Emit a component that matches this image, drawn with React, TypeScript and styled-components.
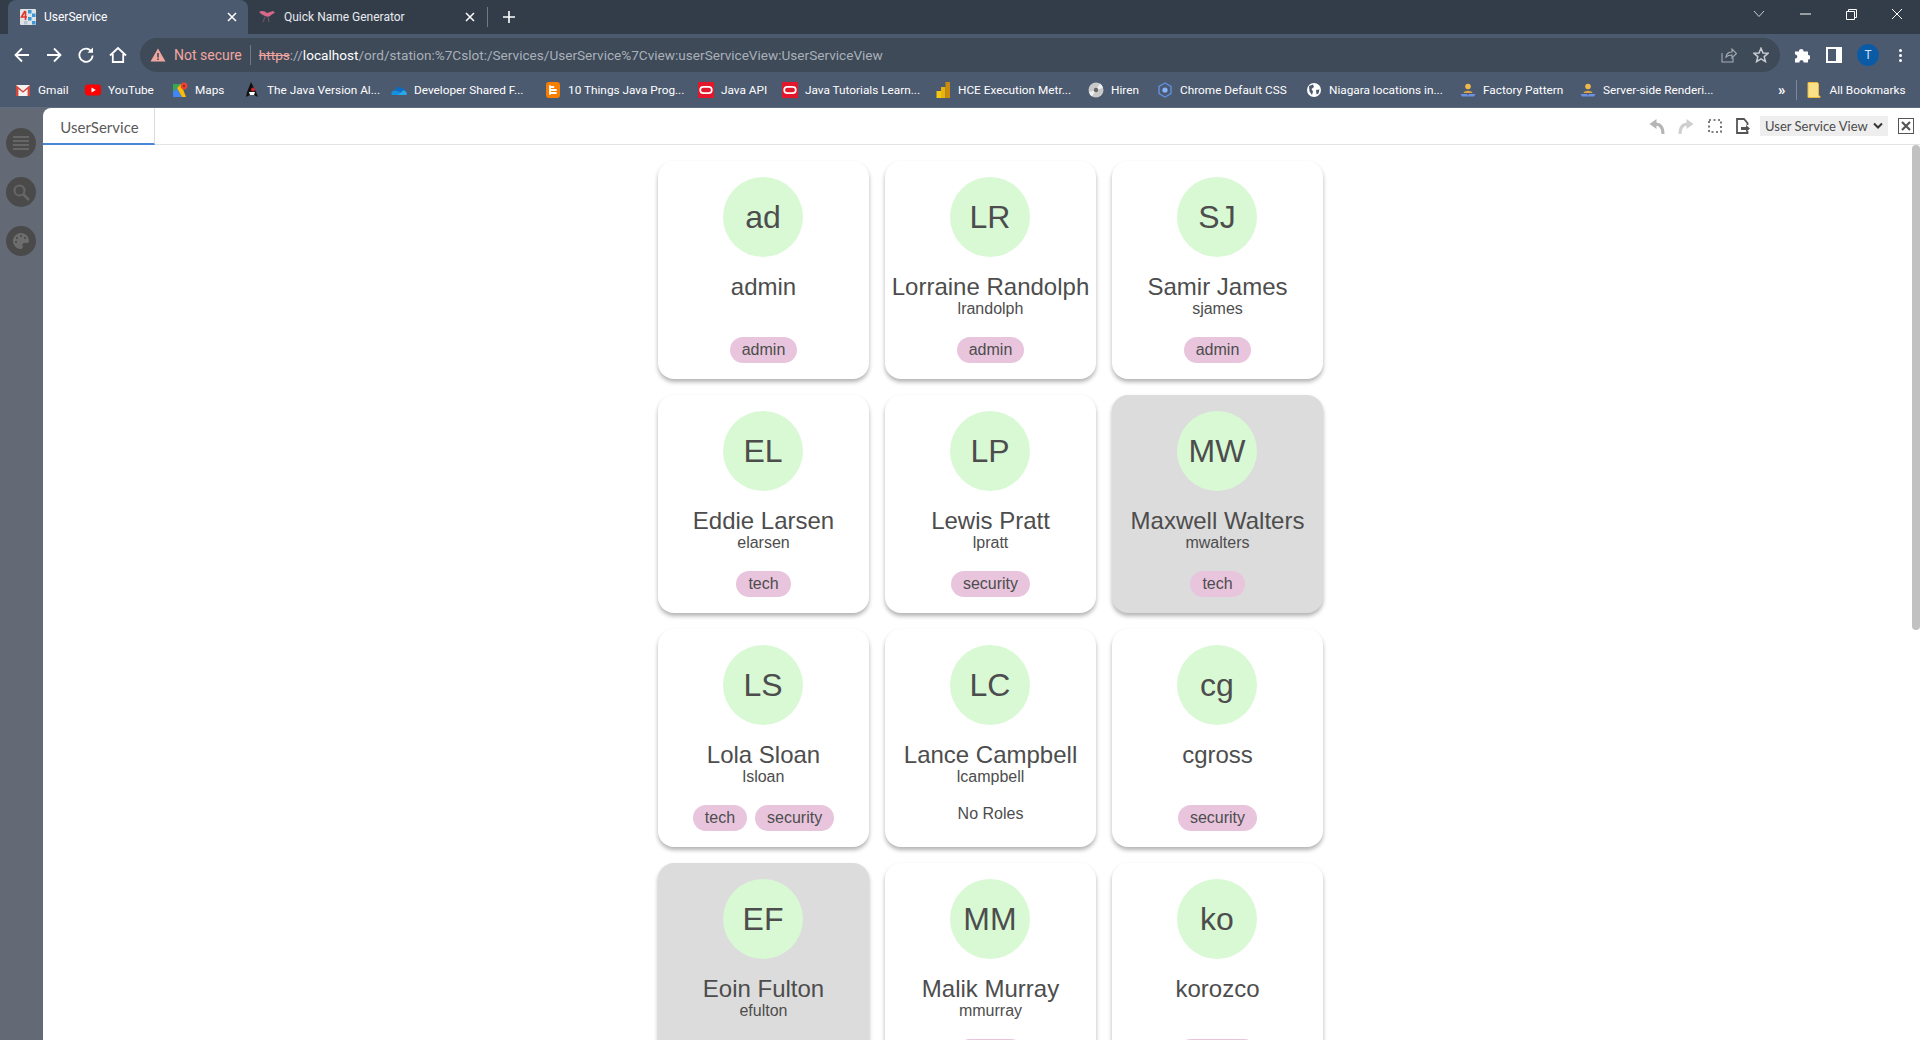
import React from 'react'
import styled, { createGlobalStyle } from 'styled-components'
import { FaPalette } from 'react-icons/fa'

const GlobalStyle = createGlobalStyle`
  html, body {
    margin: 0;
    height: 100%;
    overflow: hidden;
    background: #fff;
  }
  * {
    box-sizing: border-box;
  }
`

type User = {
  initials: string
  name: string
  login?: string
  roles: string[]
  selected?: boolean
}

const users: User[] = [
  { initials: 'ad', name: 'admin', roles: ['admin'] },
  { initials: 'LR', name: 'Lorraine Randolph', login: 'lrandolph', roles: ['admin'] },
  { initials: 'SJ', name: 'Samir James', login: 'sjames', roles: ['admin'] },
  { initials: 'EL', name: 'Eddie Larsen', login: 'elarsen', roles: ['tech'] },
  { initials: 'LP', name: 'Lewis Pratt', login: 'lpratt', roles: ['security'] },
  { initials: 'MW', name: 'Maxwell Walters', login: 'mwalters', roles: ['tech'], selected: true },
  { initials: 'LS', name: 'Lola Sloan', login: 'lsloan', roles: ['tech', 'security'] },
  { initials: 'LC', name: 'Lance Campbell', login: 'lcampbell', roles: [] },
  { initials: 'cg', name: 'cgross', roles: ['security'] },
  { initials: 'EF', name: 'Eoin Fulton', login: 'efulton', roles: [], selected: true },
  { initials: 'MM', name: 'Malik Murray', login: 'mmurray', roles: ['admin'] },
  { initials: 'ko', name: 'korozco', roles: ['security'] },
]

const Favicon4 = () => (
  <svg width="16" height="16" viewBox="0 0 16 16">
    <rect x="0" y="0" width="16" height="16" rx="1" fill="#dfe3e6" />
    <path d="M5 2 L1.5 8 H7 M5.5 2 V11" fill="none" stroke="#e2342b" strokeWidth="1.6" />
    <rect x="8" y="1" width="3.5" height="3.5" fill="#3b97d8" />
    <rect x="12" y="4.5" width="3.5" height="3.5" fill="#3b97d8" />
    <rect x="8" y="8" width="3.5" height="3.5" fill="#3b97d8" />
    <rect x="12" y="12" width="3.5" height="3.5" fill="#3b97d8" />
    <rect x="4" y="12" width="3.5" height="3.5" fill="#b9c6d0" />
  </svg>
)

const KangarooIcon = () => (
  <svg width="18" height="16" viewBox="0 0 18 16">
    <path d="M1 3 C4 1 7 2 9 4 L15 2 L17 3.5 L13 6 C12 8 9 8 7 7 C5 6 3 5 1 3 Z" fill="#d8688a" />
    <path d="M7 8 L5 13 M10 8 L11 13" stroke="#6a5560" strokeWidth="1.2" />
  </svg>
)

const GmailIcon = () => (
  <svg width="16" height="16" viewBox="0 0 16 16">
    <rect x="1" y="3" width="14" height="11" fill="#f2f2f2" />
    <path d="M1 3 L8 9 L15 3 V14 H12.6 V7 L8 10.8 L3.4 7 V14 H1 Z" fill="#d5463a" />
  </svg>
)

const YoutubeIcon = () => (
  <svg width="16" height="16" viewBox="0 0 16 16">
    <rect x="0" y="2.5" width="16" height="11" rx="3" fill="#f00" />
    <path d="M6.5 5.5 L10.8 8 L6.5 10.5 Z" fill="#fff" />
  </svg>
)

const MapsIcon = () => (
  <svg width="16" height="16" viewBox="0 0 16 16">
    <path d="M1 2 H9 L1 10 Z" fill="#35a853" />
    <path d="M1 10 L5 6 L10 15 H1 Z" fill="#4285f4" />
    <path d="M5 6 L9 2 L14 15 H10 Z" fill="#fbbc04" />
    <circle cx="12" cy="4" r="3.4" fill="#ea4335" />
    <circle cx="12" cy="4" r="1.2" fill="#a52714" />
  </svg>
)

const DukeIcon = () => (
  <svg width="16" height="16" viewBox="0 0 16 16">
    <path d="M7 0 L12 10 L14 15 L10 13 H6 L2 15 L3 10 Z" fill="#111" />
    <path d="M5 10 L11 10 L10 13 H6 Z" fill="#fff" />
    <circle cx="9" cy="7.5" r="2" fill="#d3232a" />
  </svg>
)

const OneDriveIcon = () => (
  <svg width="16" height="16" viewBox="0 0 16 16">
    <path d="M4 8 C4.5 5 8 4 10 6 C12.5 5.6 14 7 14 8.5 L8 11 Z" fill="#0f6cc0" />
    <path d="M1 13 C-0.5 11 1 8.5 3.6 8.4 L8 9.5 L11 13 Z" fill="#1490df" />
    <path d="M7 13 L12 8.5 C14.5 8 16.5 10.5 15.5 13 Z" fill="#28a8ea" />
  </svg>
)

const BloggerIcon = () => (
  <svg width="16" height="16" viewBox="0 0 16 16">
    <rect x="1" y="0" width="14" height="16" rx="3" fill="#f57d00" />
    <path d="M5 5 H8.5 M5 11 H11 M5 4 V12 M11 8 H5" fill="none" stroke="#fff" strokeWidth="1.8" strokeLinecap="round" />
  </svg>
)

const OracleIcon = () => (
  <svg width="16" height="16" viewBox="0 0 16 16">
    <rect width="16" height="16" fill="#e3172b" />
    <rect x="2.2" y="4.8" width="11.6" height="6.4" rx="3.2" fill="none" stroke="#fff" strokeWidth="1.7" />
  </svg>
)

const PowerBiIcon = () => (
  <svg width="16" height="16" viewBox="0 0 16 16">
    <rect x="1.5" y="9" width="4.5" height="7" fill="#f2c811" />
    <rect x="6" y="5" width="4.5" height="11" fill="#e8b30d" />
    <rect x="10.5" y="0" width="4.5" height="16" fill="#c98b0d" />
  </svg>
)

const DiscIcon = () => (
  <svg width="16" height="16" viewBox="0 0 16 16">
    <circle cx="8" cy="8" r="7.5" fill="#c9c9c9" />
    <path d="M8 8 L12 1.5 A7.5 7.5 0 0 1 15 6 Z" fill="#eee" />
    <path d="M8 8 L4 14.5 A7.5 7.5 0 0 1 1 10 Z" fill="#eee" />
    <circle cx="8" cy="8" r="2.2" fill="#666" />
  </svg>
)

const HexIcon = () => (
  <svg width="16" height="16" viewBox="0 0 16 16">
    <path d="M8 1 L14 4.5 L14 11.5 L8 15 L2 11.5 L2 4.5 Z" fill="none" stroke="#5e8fe0" strokeWidth="1.4" />
    <circle cx="8" cy="8" r="2.6" fill="#8ab4f8" />
  </svg>
)

const GlobeIcon = () => (
  <svg width="16" height="16" viewBox="0 0 16 16">
    <circle cx="8" cy="8" r="7" fill="#fff" />
    <path d="M3 4 L7 2.5 L8 5 L5.5 7 L7 9.5 L6 13 L3.5 9.5 Z M10 8 L13.5 7.5 L12.5 11.5 L10.5 12.5 Z" fill="#4c5a70" />
  </svg>
)

const PersonIcon = () => (
  <svg width="16" height="16" viewBox="0 0 16 16">
    <circle cx="8" cy="4.5" r="2.8" fill="#f0b84a" />
    <path d="M3.5 11 C4 8 12 8 12.5 11 Z" fill="#d9a441" />
    <path d="M0.5 12 H7 L8 13.5 L9 12 H15.5 L14 14.5 H2 Z" fill="#6c8fe0" />
  </svg>
)

type Bookmark = { label: string; width: number; icon: React.ReactNode }

const bookmarks: Bookmark[] = [
  { label: 'Gmail', width: 70, icon: <GmailIcon /> },
  { label: 'YouTube', width: 87, icon: <YoutubeIcon /> },
  { label: 'Maps', width: 72, icon: <MapsIcon /> },
  { label: 'The Java Version Al...', width: 147, icon: <DukeIcon /> },
  { label: 'Developer Shared F...', width: 154, icon: <OneDriveIcon /> },
  { label: '10 Things Java Prog...', width: 153, icon: <BloggerIcon /> },
  { label: 'Java API', width: 84, icon: <OracleIcon /> },
  { label: 'Java Tutorials Learn...', width: 153, icon: <OracleIcon /> },
  { label: 'HCE Execution Metr...', width: 153, icon: <PowerBiIcon /> },
  { label: 'Hiren', width: 69, icon: <DiscIcon /> },
  { label: 'Chrome Default CSS', width: 149, icon: <HexIcon /> },
  { label: 'Niagara locations in...', width: 154, icon: <GlobeIcon /> },
  { label: 'Factory Pattern', width: 120, icon: <PersonIcon /> },
  { label: 'Server-side Renderi...', width: 198, icon: <PersonIcon /> },
]

const Card = ({ user }: { user: User }) => (
  <CardBox $selected={user.selected}>
    <Avatar>{user.initials}</Avatar>
    <Name>{user.name}</Name>
    <Login>{user.login}</Login>
    {user.roles.length > 0 ? (
      <Roles>
        {user.roles.map((role) => (
          <Role key={role}>{role}</Role>
        ))}
      </Roles>
    ) : (
      <NoRoles>No Roles</NoRoles>
    )}
  </CardBox>
)

export default function App() {
  return (
    <>
      <GlobalStyle />
      <Page>
        <TabStrip>
          <ActiveTab>
            <Favicon4 />
            <TabTitle>UserService</TabTitle>
            <TabClose>
              <svg width="10" height="10" viewBox="0 0 10 10">
                <path d="M1 1 L9 9 M9 1 L1 9" stroke="#fff" strokeWidth="1.5" />
              </svg>
            </TabClose>
          </ActiveTab>
          <Tab>
            <KangarooIcon />
            <TabTitle>Quick Name Generator</TabTitle>
            <TabClose>
              <svg width="10" height="10" viewBox="0 0 10 10">
                <path d="M1 1 L9 9 M9 1 L1 9" stroke="#fff" strokeWidth="1.5" />
              </svg>
            </TabClose>
          </Tab>
          <TabDivider />
          <NewTab>
            <svg width="12" height="12" viewBox="0 0 12 12">
              <path d="M6 0 V12 M0 6 H12" stroke="#fff" strokeWidth="1.6" />
            </svg>
          </NewTab>
          <WindowControls>
            <WindowButton>
              <svg width="12" height="8" viewBox="0 0 12 8">
                <path d="M1 1 L6 6.5 L11 1" fill="none" stroke="#c8ccd2" strokeWidth="1" />
              </svg>
            </WindowButton>
            <WindowButton>
              <svg width="11" height="2" viewBox="0 0 11 2">
                <path d="M0 1 H11" stroke="#fff" strokeWidth="1" />
              </svg>
            </WindowButton>
            <WindowButton>
              <svg width="11" height="11" viewBox="0 0 11 11">
                <path d="M0.5 2.5 H8.5 V10.5 H0.5 Z M2.5 2.5 V0.5 H10.5 V8.5 H8.5" fill="none" stroke="#fff" strokeWidth="1" />
              </svg>
            </WindowButton>
            <WindowButton>
              <svg width="12" height="12" viewBox="0 0 12 12">
                <path d="M1 1 L11 11 M11 1 L1 11" stroke="#fff" strokeWidth="1" />
              </svg>
            </WindowButton>
          </WindowControls>
        </TabStrip>

        <Toolbar>
          <NavButton>
            <svg width="16" height="16" viewBox="0 0 16 16">
              <path d="M15 8 H2 M8 1.5 L1.5 8 L8 14.5" fill="none" stroke="#fff" strokeWidth="1.8" />
            </svg>
          </NavButton>
          <NavButton>
            <svg width="16" height="16" viewBox="0 0 16 16">
              <path d="M1 8 H14 M8 1.5 L14.5 8 L8 14.5" fill="none" stroke="#fff" strokeWidth="1.8" />
            </svg>
          </NavButton>
          <NavButton>
            <svg width="16" height="16" viewBox="0 0 16 16">
              <path d="M13.5 4.5 A6.6 6.6 0 1 0 14.6 8.5" fill="none" stroke="#fff" strokeWidth="1.8" />
              <path d="M9.5 5.8 H15 V0.5 Z" fill="#fff" />
            </svg>
          </NavButton>
          <NavButton>
            <svg width="18" height="18" viewBox="0 0 18 18">
              <path d="M1 9.5 L9 2 L17 9.5 M3.8 8 V16 H14.2 V8" fill="none" stroke="#fff" strokeWidth="1.8" />
            </svg>
          </NavButton>
          <Omnibox>
            <svg width="16" height="14" viewBox="0 0 16 14">
              <path d="M8 0.5 L15.5 13.5 H0.5 Z" fill="#f2a6a0" />
              <path d="M7.2 5 H8.8 V9.5 H7.2 Z M7.2 10.5 H8.8 V12 H7.2 Z" fill="#3f4a58" />
            </svg>
            <NotSecure>Not secure</NotSecure>
            <OmniDivider />
            <Url>
              <Scheme>https</Scheme>
              ://
              <Host>localhost</Host>
              /ord/station:%7Cslot:/Services/UserService%7Cview:userServiceView:UserServiceView
            </Url>
            <OmniActions>
              <svg width="16" height="16" viewBox="0 0 16 16">
                <path d="M1 6 V15 H12 V11 M5 10 C5.5 6.5 8 5 11 5 V2 L15.5 6.5 L11 11 V8 C8.5 8 6.5 8.5 5 10 Z" fill="none" stroke="#a5acb5" strokeWidth="1.1" />
              </svg>
              <svg width="16" height="16" viewBox="0 0 16 16">
                <path d="M8 1.2 L10 6 L15 6.3 L11.2 9.6 L12.4 14.6 L8 11.9 L3.6 14.6 L4.8 9.6 L1 6.3 L6 6 Z" fill="none" stroke="#c8ccd2" strokeWidth="1.5" />
              </svg>
            </OmniActions>
          </Omnibox>
          <ToolbarActions>
            <svg width="16" height="16" viewBox="0 0 16 16">
              <path d="M1 4.5 H5 C4.5 1 10 1 9.5 4.5 H14 V8 C17 7.5 17 13 14 12.5 V15.5 H9.5 C10 12.5 5 12.5 5.5 15.5 H1 V11.5 C4 12 4 7 1 7.5 Z" fill="#fff" />
            </svg>
            <SidePanelIcon />
            <Profile>T</Profile>
            <MenuDots>
              <span />
              <span />
              <span />
            </MenuDots>
          </ToolbarActions>
        </Toolbar>

        <BookmarkBar>
          {bookmarks.map((b) => (
            <BookmarkItem key={b.label} $width={b.width}>
              {b.icon}
              <span>{b.label}</span>
            </BookmarkItem>
          ))}
          <Overflow>»</Overflow>
          <BarDivider />
          <AllBookmarks>
            <svg width="14" height="16" viewBox="0 0 14 16">
              <path d="M1 0.5 H10.5 L11.5 2 V14 H13 V15.5 H1 Z" fill="#fbe08a" stroke="#e8b93a" strokeWidth="1" />
            </svg>
            <span>All Bookmarks</span>
          </AllBookmarks>
        </BookmarkBar>

        <Body>
          <Sidebar>
            <SideButton>
              <svg width="18" height="16" viewBox="0 0 18 16">
                <path d="M1 2 H17 M1 6 H17 M1 10 H17 M1 14 H17" stroke="#666" strokeWidth="2" />
              </svg>
            </SideButton>
            <SideButton>
              <svg width="18" height="18" viewBox="0 0 18 18">
                <circle cx="7.5" cy="7.5" r="5" fill="none" stroke="#666" strokeWidth="2.2" />
                <path d="M11.5 11.5 L17 17" stroke="#666" strokeWidth="2.6" />
              </svg>
            </SideButton>
            <SideButton>
              <FaPalette size={16} color="#6d6d6d" />
            </SideButton>
          </Sidebar>

          <Main>
            <ViewTabs>
              <ViewTab>UserService</ViewTab>
              <ViewTools>
                <svg width="16" height="16" viewBox="0 0 16 16">
                  <path d="M7.5 1 L0.5 6 L7.5 11 Z" fill="#b5b5b5" />
                  <path d="M6 6 C11 6 14 9 14 16" fill="none" stroke="#b5b5b5" strokeWidth="3" />
                </svg>
                <svg width="16" height="16" viewBox="0 0 16 16">
                  <path d="M8.5 1 L15.5 6 L8.5 11 Z" fill="#cfcfcf" />
                  <path d="M10 6 C5 6 2 9 2 16" fill="none" stroke="#cfcfcf" strokeWidth="3" />
                </svg>
                <svg width="16" height="14" viewBox="0 0 16 14">
                  <rect x="2" y="1" width="12" height="12" fill="none" stroke="#555" strokeWidth="1.6" strokeDasharray="2 2.5" />
                </svg>
                <svg width="14" height="16" viewBox="0 0 14 16">
                  <path d="M11.5 7 V5 L8 1 H1 V15 H11.5 V13" fill="none" stroke="#555" strokeWidth="1.8" />
                  <path d="M5 9 H10 V7 L14 10.5 L10 14 V12 H5 Z" fill="#555" />
                </svg>
                <ViewSelect>
                  User Service View
                  <svg width="10" height="8" viewBox="0 0 10 8">
                    <path d="M1 1.5 L5 5.5 L9 1.5" fill="none" stroke="#333" strokeWidth="2" />
                  </svg>
                </ViewSelect>
                <ViewClose>
                  <svg width="10" height="10" viewBox="0 0 10 10">
                    <path d="M1 1 L9 9 M9 1 L1 9" stroke="#555" strokeWidth="2.2" />
                  </svg>
                </ViewClose>
              </ViewTools>
            </ViewTabs>
            <Scroller>
              <Grid>
                {users.map((u) => (
                  <Card key={u.initials} user={u} />
                ))}
              </Grid>
              <ScrollThumb />
            </Scroller>
          </Main>
        </Body>
      </Page>
    </>
  )
}

const chromeFont = `Roboto, 'Noto Sans', sans-serif`

const Page = styled.div`
  display: flex;
  flex-direction: column;
  width: 1920px;
  height: 1040px;
  overflow: hidden;
  font-family: ${chromeFont};
`

const TabStrip = styled.div`
  display: flex;
  align-items: flex-end;
  flex: none;
  height: 34px;
  padding-left: 8px;
  background: #333d4a;
`

const ActiveTab = styled.div`
  display: flex;
  align-items: center;
  width: 240px;
  height: 34px;
  padding: 0 10px 0 12px;
  background: #4c5a70;
  border-radius: 8px 8px 0 0;
  color: #fff;
`

const Tab = styled(ActiveTab)`
  background: transparent;
  color: #e8eaed;
  width: 238px;
  padding-left: 10px;
`

const TabTitle = styled.span`
  flex: 1;
  margin-left: 8px;
  font-size: 12px;
  white-space: nowrap;
`

const TabClose = styled.span`
  display: flex;
  align-items: center;
  margin-right: 1px;
`

const TabDivider = styled.div`
  align-self: center;
  width: 1px;
  height: 20px;
  margin-left: 1px;
  background: #6f7884;
`

const NewTab = styled.div`
  display: flex;
  align-self: center;
  margin-left: 15px;
`

const WindowControls = styled.div`
  display: flex;
  align-self: flex-start;
  margin-left: auto;
`

const WindowButton = styled.div`
  display: flex;
  align-items: center;
  justify-content: center;
  width: 46px;
  height: 28px;
`

const Toolbar = styled.div`
  display: flex;
  align-items: center;
  flex: none;
  height: 38px;
  padding: 4px 0 0 6px;
  background: #4c5a70;
`

const NavButton = styled.div`
  display: flex;
  align-items: center;
  justify-content: center;
  width: 32px;
  height: 32px;
`

const Omnibox = styled.div`
  display: flex;
  align-items: center;
  width: 1640px;
  height: 34px;
  margin-left: 6px;
  padding: 0 10px;
  background: #3e4a58;
  border-radius: 17px;
`

const NotSecure = styled.span`
  margin-left: 8px;
  font-size: 14px;
  color: #f2a6a0;
  white-space: nowrap;
`

const OmniDivider = styled.div`
  width: 1px;
  height: 20px;
  margin: 0 8px;
  background: #6f7884;
`

const Url = styled.span`
  font-size: 13.6px;
  color: #a9b0b9;
  white-space: nowrap;
`

const Scheme = styled.span`
  color: #f2a6a0;
  text-decoration: line-through;
`

const Host = styled.span`
  color: #fff;
`

const OmniActions = styled.div`
  display: flex;
  align-items: center;
  gap: 16px;
  margin-left: auto;
  padding-right: 1px;
`

const ToolbarActions = styled.div`
  display: flex;
  align-items: center;
  gap: 15px;
  margin-left: 14px;
`

const SidePanelIcon = styled.div`
  width: 16px;
  height: 16px;
  margin-left: 1px;
  border: 2px solid #fff;
  border-right-width: 6px;
  background: #4c5a70;
`

const Profile = styled.div`
  display: flex;
  align-items: center;
  justify-content: center;
  width: 22px;
  height: 22px;
  border-radius: 50%;
  background: #0b5aa6;
  color: #cfe3f7;
  font-size: 12px;
`

const MenuDots = styled.div`
  display: flex;
  flex-direction: column;
  gap: 2px;
  margin-left: 5px;

  span {
    display: block;
    width: 3px;
    height: 3px;
    border-radius: 50%;
    background: #fff;
  }
`

const BookmarkBar = styled.div`
  display: flex;
  align-items: center;
  flex: none;
  height: 36px;
  padding-left: 15px;
  background: #4c5a70;
  border-bottom: 1px solid #5f6b7e;
`

const BookmarkItem = styled.div<{ $width: number }>`
  display: flex;
  align-items: center;
  flex: none;
  gap: 7px;
  width: ${(p) => p.$width}px;
  font-size: 11.8px;
  color: #fff;
  white-space: nowrap;
`

const Overflow = styled.span`
  font-size: 15px;
  font-weight: 700;
  color: #fff;
`

const BarDivider = styled.div`
  width: 1px;
  height: 20px;
  margin: 0 10px 0 10px;
  background: #7d8796;
`

const AllBookmarks = styled.div`
  display: flex;
  align-items: center;
  gap: 9px;
  font-size: 11.8px;
  color: #fff;
`

const Body = styled.div`
  display: flex;
  flex: 1;
  min-height: 0;
  background: #636a75;
`

const Sidebar = styled.div`
  display: flex;
  flex-direction: column;
  gap: 19px;
  flex: none;
  width: 43px;
  padding: 20px 0 0 6px;
`

const SideButton = styled.div`
  display: flex;
  align-items: center;
  justify-content: center;
  width: 30px;
  height: 30px;
  border-radius: 50%;
  background: #4a4a4a;
`

const Main = styled.div`
  display: flex;
  flex-direction: column;
  flex: 1;
  min-width: 0;
  background: #fff;
  border-radius: 8px 0 0 0;
`

const ViewTabs = styled.div`
  display: flex;
  flex: none;
  height: 37px;
  border-bottom: 1px solid #e3e3e3;
`

const ViewTab = styled.div`
  display: flex;
  align-items: center;
  justify-content: center;
  width: 112px;
  height: 37px;
  padding: 2px 0 0 2px;
  border-right: 1px solid #dcdcdc;
  border-bottom: 2px solid #4a86d8;
  border-radius: 8px 0 0 0;
  font-family: Lato, sans-serif;
  font-size: 15px;
  color: #5a5a5a;
`

const ViewTools = styled.div`
  display: flex;
  align-items: center;
  gap: 13px;
  margin-left: auto;
  padding-right: 6px;
`

const ViewSelect = styled.div`
  display: flex;
  align-items: center;
  justify-content: space-between;
  width: 128px;
  height: 20px;
  margin-left: -3px;
  padding: 0 5px;
  background: #eee;
  font-family: Lato, sans-serif;
  font-size: 13px;
  color: #4a4a4a;
`

const ViewClose = styled.div`
  display: flex;
  align-items: center;
  justify-content: center;
  width: 16px;
  height: 16px;
  margin-left: -3px;
  border: 1px solid #555;
`

const Scroller = styled.div`
  position: relative;
  flex: 1;
  min-height: 0;
  overflow: hidden;
`

const ScrollThumb = styled.div`
  position: absolute;
  top: 0;
  right: 0;
  width: 8px;
  height: 485px;
  background: #c1c1c1;
  border-radius: 4px;
`

const Grid = styled.div`
  display: grid;
  grid-template-columns: repeat(3, 211px);
  justify-content: center;
  gap: 16px;
  align-content: start;
  padding: 16px 0 0 18px;
`

const CardBox = styled.div<{ $selected?: boolean }>`
  display: flex;
  flex-direction: column;
  align-items: center;
  height: 218px;
  padding: 16px 0;
  background: ${(p) => (p.$selected ? '#dcdcdc' : '#fff')};
  border-radius: 16px;
  box-shadow: 0 3px 4px rgba(0, 0, 0, 0.3);
  font-family: 'Liberation Sans', Arial, sans-serif;
  color: #4d4d4d;
`

const Avatar = styled.div`
  display: flex;
  align-items: center;
  justify-content: center;
  flex: none;
  width: 80px;
  height: 80px;
  margin-right: 1px;
  border-radius: 50%;
  background: #d9f9d5;
  font-size: 32px;
`

const Name = styled.div`
  margin-top: 16px;
  font-size: 24px;
  line-height: 28px;
  white-space: nowrap;
`

const Login = styled.div`
  height: 16px;
  font-size: 16px;
  line-height: 16px;
`

const Roles = styled.div`
  display: flex;
  gap: 8px;
  margin-top: auto;
`

const Role = styled.span`
  height: 26px;
  padding: 0 12px;
  border-radius: 13px;
  background: #e8c5dd;
  font-size: 16px;
  line-height: 26px;
`

const NoRoles = styled.div`
  margin-top: auto;
  margin-bottom: 8px;
  font-size: 16px;
  line-height: 18px;
`
